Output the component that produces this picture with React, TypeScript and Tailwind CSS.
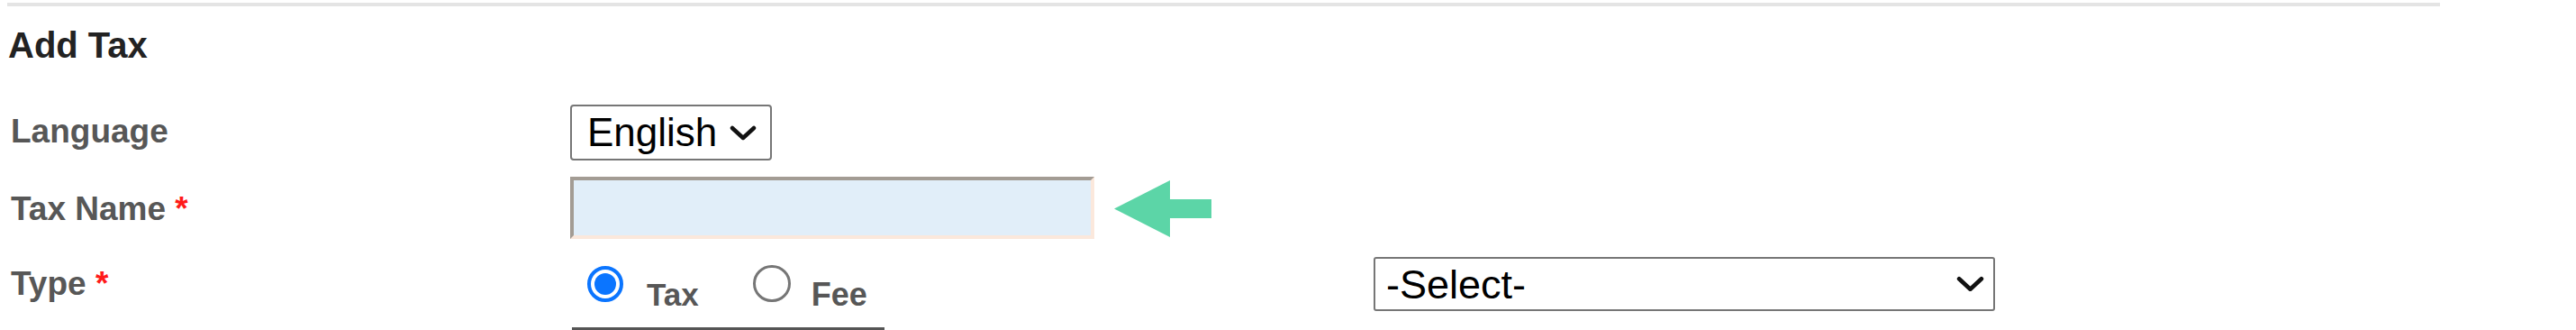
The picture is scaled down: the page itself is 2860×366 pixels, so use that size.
import React from "react";

const Chevron = ({ w, h }: { w: number; h: number }) => (
  <svg width={w} height={h} viewBox="0 0 30 17" fill="none">
    <path d="M3 3 L15 14 L27 3" stroke="#111" strokeWidth="4.5" strokeLinecap="round" strokeLinejoin="round" />
  </svg>
);

const Label = ({ text, required, className }: { text: string; required?: boolean; className?: string }) => (
  <div className={"w-[621px] shrink-0 text-[37px] leading-[37px] font-bold text-[#575757] " + (className ?? "")}>
    {text}
    {required && <span className="text-[#ff1a1a]"> *</span>}
  </div>
);

const Radio = ({ checked }: { checked?: boolean }) =>
  checked ? (
    <div className="w-[40px] h-[40px] rounded-full border-[4px] border-[#0b75ff] bg-white flex items-center justify-center shrink-0">
      <div className="w-[24px] h-[24px] rounded-full bg-[#0b75ff]" />
    </div>
  ) : (
    <div className="w-[42px] h-[41px] rounded-full border-[3px] border-[#767676] bg-white shrink-0" />
  );

export default function App() {
  return (
    <div className="w-[2860px] h-[366px] bg-white overflow-hidden flex flex-col font-['Liberation_Sans',Arial,sans-serif]">
      {/* top rule */}
      <div className="ml-[8px] mt-[3px] w-[2701px] h-[4px] shrink-0 bg-[#e4e4e4]" />

      <h2 className="ml-[9px] mt-[23px] h-[40px] text-[40px] leading-[40px] font-bold text-[#222]">Add Tax</h2>

      {/* Language */}
      <div className="flex items-start pl-[12px] mt-[46px] h-[62px] shrink-0">
        <Label text="Language" className="mt-[11px]" />
        <div className="w-[224px] h-[62px] border-2 border-[#767676] rounded-[4px] bg-white flex items-center pl-[17px] gap-[14px]">
          <span className="text-[44px] leading-[44px] text-black">English</span>
          <Chevron w={30} h={17} />
        </div>
      </div>

      {/* Tax Name */}
      <div className="flex items-start pl-[12px] mt-[18px] h-[69px] shrink-0">
        <Label text="Tax Name" required className="mt-[17px]" />
        <div className="w-[582px] h-[69px] border-[4px] border-t-[#a39c94] border-l-[#a39c94] border-r-[#fbe8dc] border-b-[#fbe8dc] bg-[#e1eef9]" />
        <svg className="ml-[22px] mt-[4px]" width="108" height="63" viewBox="0 0 108 63">
          <polygon points="0,31.5 62,0 62,21 108,21 108,42 62,42 62,63" fill="#5cd5a7" />
        </svg>
      </div>

      {/* Type */}
      <div className="flex items-start pl-[12px] mt-[20px] h-[81px] shrink-0">
        <Label text="Type" required className="mt-[11px]" />
        <div className="ml-[2px] w-[347px] h-[81px] border-b-[3px] border-[#555] flex items-start">
          <div className="ml-[17px] mt-[10px]">
            <Radio checked />
          </div>
          <span className="ml-[26px] mt-[24px] text-[35px] leading-[35px] font-bold text-[#575757]">Tax</span>
          <div className="ml-[60px] mt-[9px]">
            <Radio />
          </div>
          <span className="ml-[23px] mt-[24px] text-[36px] leading-[36px] font-bold text-[#575757]">Fee</span>
        </div>
        <div className="ml-[543px] w-[690px] h-[60px] border-2 border-[#767676] rounded-[3px] bg-white flex items-center justify-between pl-[12px] pr-[10px]">
          <span className="text-[45px] leading-[45px] text-black">-Select-</span>
          <Chevron w={31} h={18} />
        </div>
      </div>
    </div>
  );
}
